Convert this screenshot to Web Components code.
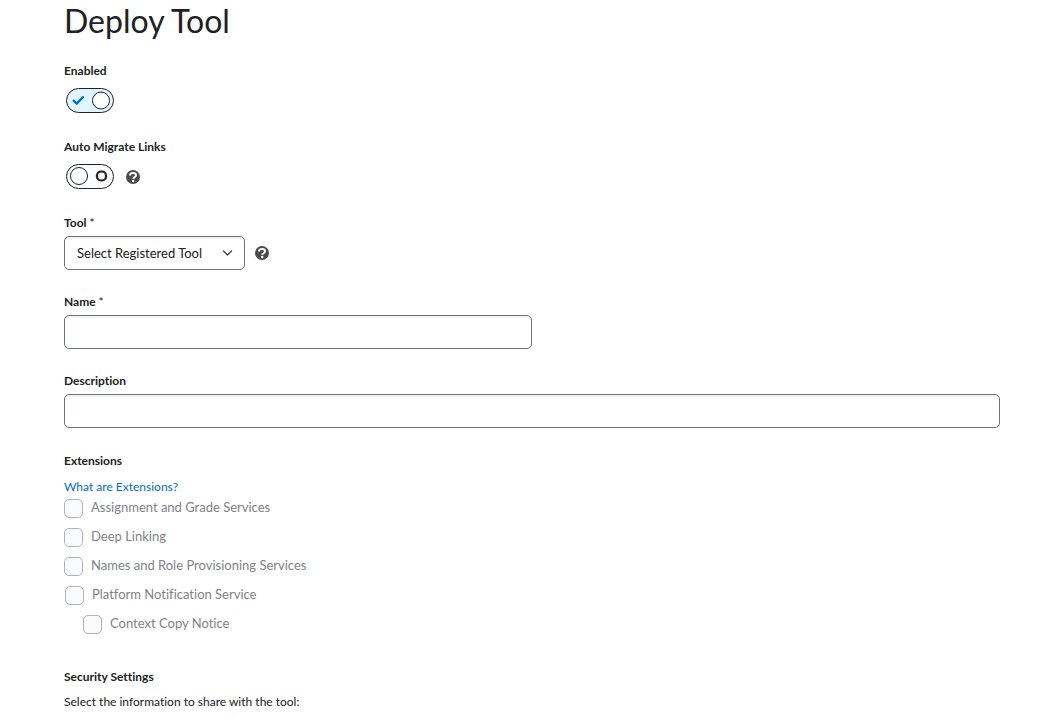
<!DOCTYPE html>
<html lang="en">
<head>
<meta charset="utf-8">
<title>Deploy Tool</title>
<style>
body { margin: 0; background: #fff; color: #202122; font-family: Lato, sans-serif; font-size: 13px; line-height: 18px; font-variant-ligatures: none; }
</style>
</head>
<body>
<deploy-page></deploy-page>
<script>
const base = '*{box-sizing:border-box}';
function define(name, html) {
  customElements.define(name, class extends HTMLElement {
    constructor() {
      super();
      const t = document.createElement('template');
      t.innerHTML = typeof html === 'function' ? html(this) : html;
      this.attachShadow({ mode: 'open' }).append(t.content.cloneNode(true));
    }
  });
}

const labelCss = 'label{display:block;font-size:12px;line-height:16px;font-weight:700}label span{font-weight:400}';
const star = el => el.hasAttribute('required') ? ' <span>*</span>' : '';

define('help-button', `<style>${base}
:host{display:block;width:14px;height:14px}
button{display:block;width:14px;height:14px;padding:0;border:0;background:none}
svg{display:block}
</style><button type="button" aria-label="Help"><svg width="14" height="14" viewBox="0 0 14 14" fill="none"><circle cx="7" cy="7" r="7" fill="#494c4e"/><path d="M4 5.4C4 3.7 5.3 3 7 3s3 .8 3 2.3c0 1.8-2.7 1.7-2.7 3.4" stroke="#fff" stroke-width="2"/><circle cx="7.2" cy="11" r="1.2" fill="#fff"/></svg></button>`);

define('switch-field', el => {
  const on = el.hasAttribute('on');
  return `<style>${base}${labelCss}
:host{display:block;padding-bottom:26px}
.row{display:flex;align-items:center;gap:12px;margin:9px 0 0 2px}
.switch{display:grid;width:48px;height:25px}
input,svg{grid-area:1/1;width:48px;height:25px;margin:0}
input{appearance:none;border:1px solid #202122;border-radius:13px;background:#f9fbff}
input:checked{background:#e0f5ff}
svg{pointer-events:none}
</style><label for="c">${el.getAttribute('label')}</label>
<div class="row"><span class="switch"><input id="c" type="checkbox" role="switch" ${on ? 'checked' : ''}>
<svg viewBox="0 0 48 25" fill="none">${on
  ? '<circle cx="35" cy="12.5" r="8.5" fill="#fff" stroke="#202122"/><path d="M7.7 12.8l3 2.8 6.2-6.4" stroke="#006fbf" stroke-width="2.4" stroke-linecap="round" stroke-linejoin="round"/>'
  : '<circle cx="13" cy="12" r="8.5" fill="#fff" stroke="#202122"/><rect x="31" y="7.5" width="9" height="9" rx="4" stroke="#202122" stroke-width="2.2"/>'}</svg></span><slot></slot></div>`;
});

define('select-field', el => `<style>${base}${labelCss}
:host{display:block;padding-bottom:24px}
.row{display:flex;align-items:center;gap:10px;margin-top:5px}
.box{display:grid;align-items:center}
select,svg{grid-area:1/1}
select{appearance:none;height:34px;width:181px;padding:0 32px 0 12px;border:1px solid #6e7376;border-radius:5px;background:#fff;box-shadow:inset 0 2px 0 #f0f4f8;color:#202122;font:13px/18px Lato,sans-serif;font-variant-ligatures:none}
svg{justify-self:end;margin-right:12px;pointer-events:none}
</style><label for="s">${el.getAttribute('label')}${star(el)}</label>
<div class="row"><span class="box"><select id="s"><option>${el.getAttribute('option')}</option></select>
<svg width="11" height="8" viewBox="0 0 11 8" fill="none"><path d="M1.5 2l4 4 4-4" stroke="#494c4e" stroke-width="1.5" stroke-linecap="round" stroke-linejoin="round"/></svg></span><slot></slot></div>`);

define('text-field', el => `<style>${base}${labelCss}
:host{display:block;padding-bottom:24px}
:host([half]) input{width:50%}
input{display:block;width:100%;height:34px;margin-top:5px;padding:0 12px;border:1px solid #6e7376;border-radius:5px;background:#fff;box-shadow:inset 0 2px 0 #f0f4f8;font:13px/18px Lato,sans-serif}
</style><label for="t">${el.getAttribute('label')}${star(el)}</label><input id="t" type="text">`);

define('check-row', `<style>${base}
:host{display:block}
:host([sub]){padding-left:1px}
:host([nested]){padding-left:19px}
label{display:flex;gap:8px;height:29px;color:#808386}
input{appearance:none;width:19px;height:19px;margin:1px 0 0;border:1px solid #b0b4b8;border-radius:5px;background:#f9fbff}
</style><label><input type="checkbox" disabled><span><slot></slot></span></label>`);

define('deploy-page', `<style>${base}
:host{display:block;padding:0 45px 8px 64px}
h1{margin:0 0 21px;font-size:32px;line-height:42px;font-weight:400}
h2{margin:0;font-size:12px;line-height:18px;font-weight:700}
a{display:block;width:max-content;margin:9px 0 3px;font-size:12px;line-height:16px;color:#006fbf;text-decoration:none}
p{margin:8px 0 0;font-size:12px;line-height:16px}
.security{margin-top:25px}
</style>
<main>
<h1>Deploy Tool</h1>
<form>
<switch-field label="Enabled" on></switch-field>
<switch-field label="Auto Migrate Links"><help-button></help-button></switch-field>
<select-field label="Tool" required option="Select Registered Tool"><help-button></help-button></select-field>
<text-field label="Name" required half></text-field>
<text-field label="Description"></text-field>
<section>
<h2>Extensions</h2>
<a href="#extensions">What are Extensions?</a>
<check-row>Assignment and Grade Services</check-row>
<check-row>Deep Linking</check-row>
<check-row>Names and Role Provisioning Services</check-row>
<check-row sub>Platform Notification Service</check-row>
<check-row nested>Context Copy Notice</check-row>
</section>
<section class="security">
<h2>Security Settings</h2>
<p>Select the information to share with the tool:</p>
</section>
</form>
</main>`);
</script>
</body>
</html>
